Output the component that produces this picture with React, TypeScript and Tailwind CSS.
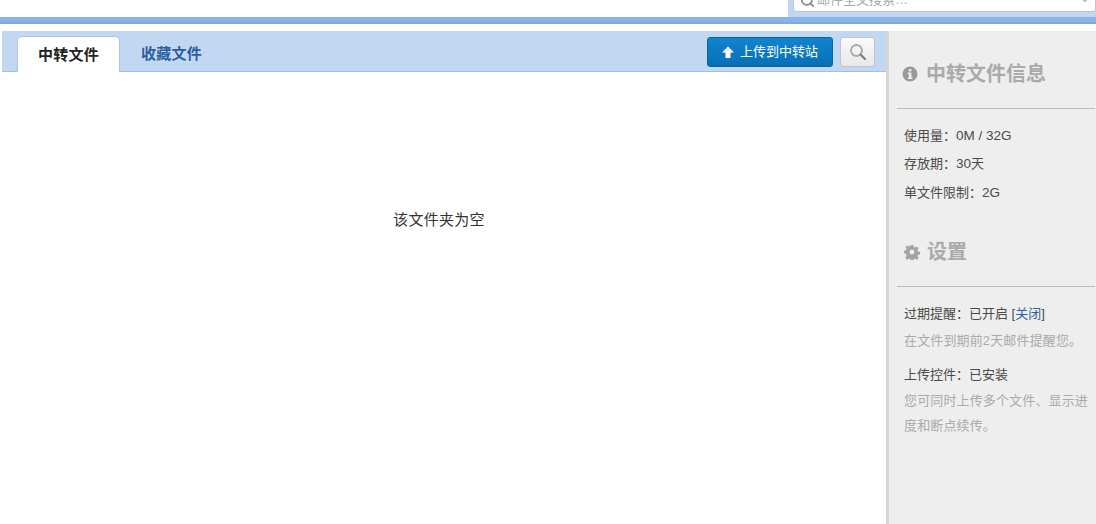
import React from 'react';
import { Search, ChevronDown } from 'lucide-react';

const font = "font-['Liberation_Sans','Noto_Sans_CJK_SC',sans-serif]";

const InfoIcon = () => (
  <svg viewBox="0 0 16 16" className="w-4 h-4 shrink-0">
    <circle cx="8" cy="8" r="7.5" fill="#999" />
    <rect x="6.8" y="3" width="2.6" height="2.4" fill="#eee" />
    <path d="M5.8 6.6h3.6v5h1v1.4H5.8v-1.4h1v-3.6h-1z" fill="#eee" />
  </svg>
);

const GearIcon = () => (
  <svg viewBox="0 0 16 16" className="w-4 h-4 shrink-0">
    <path
      fillRule="evenodd"
      fill="#a3a3a3"
      d="M6.7 1h2.6l.4 2 1.3.6 1.8-1.1 1.8 1.8-1.1 1.8.6 1.3 2 .4v2.6l-2 .4-.6 1.3 1.1 1.8-1.8 1.8-1.8-1.1-1.3.6-.4 2H6.7l-.4-2-1.3-.6-1.8 1.1-1.8-1.8 1.1-1.8L2 9.7l-2-.4V6.7l2-.4.6-1.3-1.1-1.8 1.8-1.8 1.8 1.1 1.3-.6zM8 5.6a2.4 2.4 0 1 0 0 4.8 2.4 2.4 0 0 0 0-4.8z"
    />
  </svg>
);

const LensIcon = () => (
  <svg viewBox="0 0 18 18" className="w-[18px] h-[18px]">
    <circle cx="7.5" cy="7.5" r="5.5" fill="none" stroke="#a8a8a8" strokeWidth="1.8" />
    <path d="M11.6 11.6L16 16" stroke="#808080" strokeWidth="2.2" strokeLinecap="round" />
  </svg>
);

const App: React.FC = () => {
  return (
    <div className={`${font} w-[1096px] h-[524px] overflow-hidden bg-white flex flex-col text-[13px] text-[#4a4a4a]`}>
      <div className="h-[17px] flex justify-end shrink-0">
        <div className="w-[308px] bg-[#c2d8f2] pl-[5px] flex items-end overflow-hidden">
          <div className="w-full h-[24px] mb-[5px] shrink-0 bg-white border border-[#b5c4d6] rounded-[3px] flex items-center pl-[6px] pr-[4px] text-[#aaa]">
            <Search className="w-[15px] h-[15px] text-[#888]" strokeWidth={3} />
            <span className="ml-[2px] flex-1">邮件全文搜索…</span>
            <ChevronDown className="w-3 h-3 text-[#777]" />
          </div>
        </div>
      </div>
      <div className="h-[7px] shrink-0 bg-[#8ab3e6] border-b-2 border-[#7fa9dc]" />
      <div className="h-[7px] shrink-0" />
      <div className="flex-1 flex min-h-0">
        <main className="flex-1 pl-[2px] flex flex-col">
          <div className="h-[41px] shrink-0 bg-[#c2d8f2] border-b border-[#a3bfdf] flex items-end pl-[15px] pr-[11px]">
            <div className="w-[103px] h-[36px] pt-[1px] -mb-px bg-white border border-b-0 border-[#a9c5e6] rounded-t-[5px] flex items-center justify-center font-bold text-[15px] tracking-[0.25px] text-[#222]">
              中转文件
            </div>
            <div className="w-[103px] h-[35px] pt-[1px] flex items-center justify-center font-bold text-[15px] tracking-[0.25px] text-[#2a5f9e]">
              收藏文件
            </div>
            <div className="flex-1" />
            <div className="self-start mt-[6px] flex gap-[7px]">
              <button className="w-[126px] h-[30px] rounded-[3px] border border-[#0a62a8] bg-gradient-to-b from-[#1284cf] to-[#0670b6] text-white text-[13px] flex items-center justify-center gap-[6px]">
                <svg viewBox="0 0 12 12" className="w-3 h-3">
                  <path d="M6 .5l6 6H8.5V12h-5V6.5H0z" fill="#fff" />
                </svg>
                上传到中转站
              </button>
              <button className="w-[35px] h-[30px] rounded-[3px] border border-[#c4c4c4] bg-gradient-to-b from-[#fafafa] to-[#e8e8e8] flex items-center justify-center">
                <LensIcon />
              </button>
            </div>
          </div>
          <div className="flex-1 pt-[138px] pr-[10px] text-center text-[15px] tracking-[0.3px] text-[#333] leading-[20px]">该文件夹为空</div>
        </main>
        <aside className="w-[210px] shrink-0 bg-[#eeeeee] border-l-[3px] border-[#d6d6d6] pl-[8px] pr-[1px]">
          <div className="h-[78px] border-b border-[#bbb] flex items-center gap-[8px] pl-[5px] pt-[9px]">
            <InfoIcon />
            <h2 className="text-[20px] font-bold text-[#aaa]">中转文件信息</h2>
          </div>
          <div className="pl-[7px] pt-[12.5px] leading-[28.5px]">
            <p>使用量：<span className="text-[13.5px]">0M / 32G</span></p>
            <p>存放期：<span className="text-[13.5px]">30</span>天</p>
            <p>单文件限制：<span className="text-[13.5px]">2G</span></p>
          </div>
          <div className="h-[74px] mt-[5.5px] pt-[6px] border-b border-[#bbb] flex items-center gap-[7px] pl-[7px]">
            <GearIcon />
            <h2 className="text-[20px] font-bold text-[#aaa]">设置</h2>
          </div>
          <div className="pl-[7px] pt-[13px] leading-[27px]">
            <p>
              过期提醒：已开启 [<span className="text-[#2a5f9e]">关闭</span>]
            </p>
            <p className="text-[#aaa] tracking-[0.14px]">在文件到期前2天邮件提醒您。</p>
            <p className="mt-[7px]">上传控件：已安装</p>
            <p className="text-[#aaa] tracking-[0.14px] leading-[25px]">您可同时上传多个文件、显示进度和断点续传。</p>
          </div>
        </aside>
      </div>
    </div>
  );
};

export default App;
